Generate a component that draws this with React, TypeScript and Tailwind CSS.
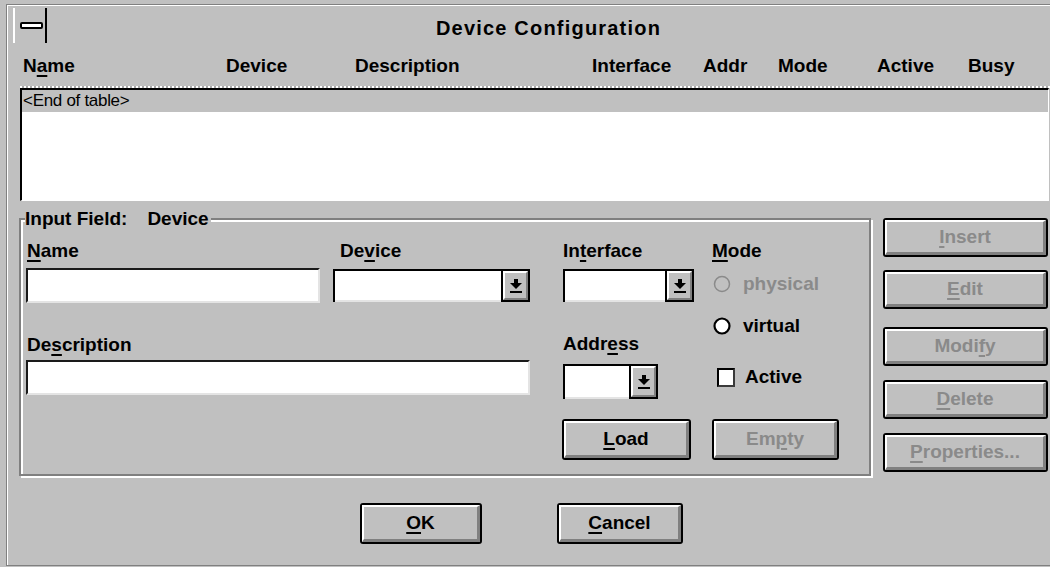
import type { ReactNode } from 'react';

const DIM = 'text-[#8a8a8a]';

// Underlines the access-key letter of a label
function Mnemonic({ text, at }: { text: string; at: number }) {
  return (
    <>
      {text.slice(0, at)}
      <u className="underline decoration-[1.5px] underline-offset-[3px]">{text[at]}</u>
      {text.slice(at + 1)}
    </>
  );
}

function PushButton({
  text,
  at,
  disabled,
  className = '',
}: {
  text: string;
  at: number;
  disabled?: boolean;
  className?: string;
}) {
  return (
    <div className={`rounded-[3px] border-2 border-black bg-[#c0c0c0] ${className}`}>
      <div
        className={`flex h-full items-center justify-center border-t-2 border-l-2 border-r-[3px] border-b-[3px] border-t-white border-l-white border-r-[#808080] border-b-[#808080] text-[19px] font-bold ${
          disabled ? DIM : 'text-black'
        }`}
      >
        <Mnemonic text={text} at={at} />
      </div>
    </div>
  );
}

function DropArrow() {
  return (
    <svg width="12" height="14" viewBox="0 0 12 14">
      <rect x="4" y="0" width="4" height="4" fill="#000" />
      <polygon points="0,4 12,4 6,10" fill="#000" />
      <rect x="0" y="12" width="12" height="2" fill="#000" />
    </svg>
  );
}

function Combo({ className = '' }: { className?: string }) {
  return (
    <div className={`flex border-t-2 border-l-2 border-t-black border-l-black ${className}`}>
      <div className="flex-1 border-b-2 border-b-[#e4e4e4] bg-white" />
      <div className="w-[29px] border-2 border-t-0 border-black bg-[#c0c0c0]">
        <div className="flex h-full items-center justify-center border-t-2 border-l-2 border-r-2 border-b-2 border-t-white border-l-white border-r-[#808080] border-b-[#808080]">
          <DropArrow />
        </div>
      </div>
    </div>
  );
}

function Edit({ className = '' }: { className?: string }) {
  return (
    <div
      className={`border-t-2 border-l-2 border-r-2 border-b-2 border-t-[#1a1a1a] border-l-[#1a1a1a] border-r-[#e4e4e4] border-b-[#e4e4e4] bg-white ${className}`}
    />
  );
}

function Radio({ disabled }: { disabled?: boolean }) {
  return (
    <svg width="18" height="20" viewBox="0 0 18 20">
      {disabled ? (
        <circle cx="9" cy="10" r="7.5" fill="#c0c0c0" stroke="#8a8a8a" strokeWidth="1.5" />
      ) : (
        <circle cx="9" cy="10" r="7.5" fill="#fff" stroke="#000" strokeWidth="2.2" />
      )}
    </svg>
  );
}

function Label({ children, className = '' }: { children: ReactNode; className?: string }) {
  return <div className={`h-[20px] text-[19px] font-bold leading-[20px] ${className}`}>{children}</div>;
}

const columns: { label: ReactNode; w: string }[] = [
  { label: <Mnemonic text="Name" at={1} />, w: 'w-[203px]' },
  { label: 'Device', w: 'w-[129px]' },
  { label: 'Description', w: 'w-[237px]' },
  { label: 'Interface', w: 'w-[111px]' },
  { label: 'Addr', w: 'w-[75px]' },
  { label: 'Mode', w: 'w-[99px]' },
  { label: 'Active', w: 'w-[91px]' },
  { label: 'Busy', w: 'w-[70px]' },
];

export default function App() {
  return (
    <div className="h-[567px] w-[1050px] overflow-hidden bg-[#c0c0c0] pl-[6px] pt-[4px] font-['Liberation_Sans',Arial,sans-serif] text-black">
      <div className="h-[562px] border-l border-t border-b border-l-[#808080] border-t-[#808080] border-b-[#808080]">
        <div className="h-full border-l border-t border-l-white border-t-white">
          {/* title bar */}
          <div className="flex h-[40px]">
            <div className="ml-[5px] mt-[2px] flex h-[35px] w-[34px] items-center border-l-2 border-r-2 border-l-white border-r-black">
              <div className="ml-[5px] h-[7px] w-[23px] rounded-[2px] border-2 border-black bg-white" />
            </div>
            <div className="flex-1 pt-[10px] text-center text-[20px] font-bold leading-[24px] tracking-[1.2px]">
              Device Configuration
            </div>
          </div>

          {/* column headings */}
          <div className="flex h-[40px] items-center pl-[15px] text-[19px] font-bold">
            {columns.map((c, i) => (
              <div key={i} className={`${c.w} shrink-0`}>
                {c.label}
              </div>
            ))}
          </div>
          <div className="ml-[12px] h-[2px] bg-[repeating-linear-gradient(90deg,#ffffff_0px,#ffffff_2px,#a8a8a8_2px,#a8a8a8_4px)]" />

          {/* device table */}
          <div className="ml-[12px] mr-[1px] h-[113px] border-t-2 border-l-2 border-r border-b border-t-black border-l-black border-r-white border-b-white bg-white">
            <div className="h-[22px] bg-[#c0c0c0] pl-[1px] text-[17px] leading-[22px] tracking-[-0.3px]">
              &lt;End of table&gt;
            </div>
          </div>

          <div className="mt-[17px] flex items-start">
            {/* Input Field group */}
            <div className="relative ml-[11px] h-[258px] w-[852px] border-2 border-[#808080] shadow-[inset_2px_2px_0_#fff,2px_2px_0_#fff]">
              <div className="absolute left-[4px] top-[-11px] flex bg-[#c0c0c0] pr-[2px] text-[19px] font-bold leading-[20px]">
                <span>Input Field:</span>
                <span className="ml-[20px]">Device</span>
              </div>

              <div className="flex pl-[5px] pt-[21px]">
                <div className="w-[504px]">
                  <div className="flex gap-[13px]">
                    <div className="w-[294px]">
                      <Label className="pl-[1px]">
                        <Mnemonic text="Name" at={0} />
                      </Label>
                      <Edit className="mt-[7px] h-[35px]" />
                    </div>
                    <div className="w-[197px]">
                      <Label className="pl-[7px]">
                        <Mnemonic text="Device" at={2} />
                      </Label>
                      <Combo className="mt-[8px] h-[33px]" />
                    </div>
                  </div>
                  <Label className="mt-[32px] pl-[1px]">
                    <Mnemonic text="Description" at={2} />
                  </Label>
                  <Edit className="mt-[5px] h-[35px]" />
                </div>

                <div className="ml-[33px] w-[131px]">
                  <Label>
                    <Mnemonic text="Interface" at={2} />
                  </Label>
                  <Combo className="mt-[8px] h-[33px]" />
                  <Label className="mt-[32px]">
                    <Mnemonic text="Address" at={4} />
                  </Label>
                  <Combo className="mt-[10px] h-[35px] w-[95px]" />
                  <PushButton text="Load" at={0} className="-ml-[1px] mt-[20px] h-[41px] w-[129px]" />
                </div>

                <div className="ml-[18px] w-[140px]">
                  <Label>
                    <Mnemonic text="Mode" at={0} />
                  </Label>
                  <div className="mt-[13px] flex h-[20px] items-center">
                    <span className="ml-[1px]">
                      <Radio disabled />
                    </span>
                    <span className={`ml-[12px] text-[19px] font-bold ${DIM}`}>physical</span>
                  </div>
                  <div className="mt-[22px] flex h-[20px] items-center">
                    <span className="ml-[1px]">
                      <Radio />
                    </span>
                    <span className="ml-[12px] text-[19px] font-bold">virtual</span>
                  </div>
                  <div className="mt-[31px] flex h-[20px] items-center">
                    <div className="ml-[5px] h-[19px] w-[18px] border-2 border-t-black border-l-black border-r-[#3a3a3a] border-b-[#3a3a3a] bg-white" />
                    <span className="ml-[10px] text-[19px] font-bold">Active</span>
                  </div>
                  <PushButton text="Empty" at={2} disabled className="mt-[32px] h-[41px] w-[127px]" />
                </div>
              </div>
            </div>

            {/* record actions */}
            <div className="ml-[12px] flex w-[165px] flex-col">
              <PushButton text="Insert" at={0} disabled className="h-[39px]" />
              <PushButton text="Edit" at={0} disabled className="mt-[13px] h-[39px]" />
              <PushButton text="Modify" at={4} disabled className="mt-[18px] h-[39px]" />
              <PushButton text="Delete" at={0} disabled className="mt-[14px] h-[39px]" />
              <PushButton text="Properties..." at={0} disabled className="mt-[14px] h-[39px]" />
            </div>
          </div>

          <div className="mt-[27px] flex gap-[75px] pl-[352px]">
            <PushButton text="OK" at={0} className="h-[41px] w-[122px]" />
            <PushButton text="Cancel" at={0} className="h-[41px] w-[126px]" />
          </div>
        </div>
      </div>
    </div>
  );
}
